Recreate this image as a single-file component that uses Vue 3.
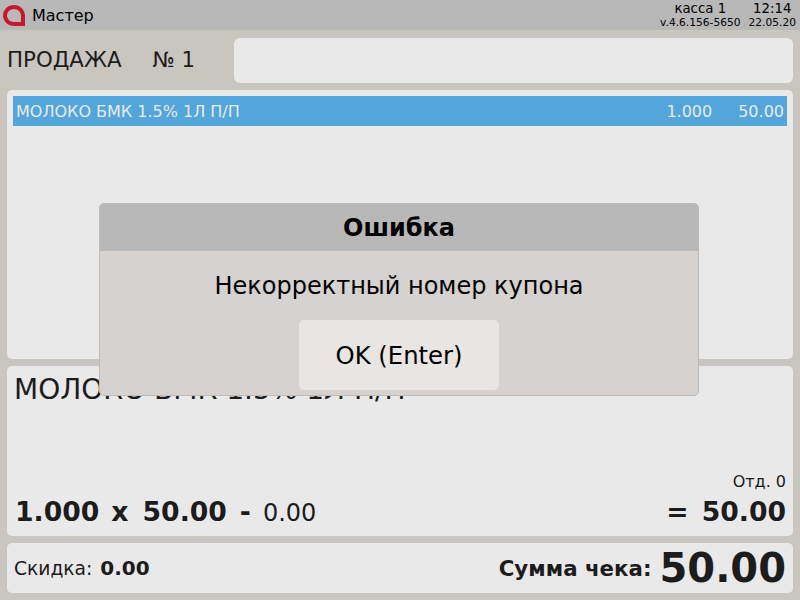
<script setup>
const item = {
  name: 'МОЛОКО БМК 1.5% 1Л П/П',
  qty: '1.000',
  price: '50.00',
}
</script>

<template>
  <div class="screen">
    <header class="top-bar">
      <svg class="logo" width="22" height="21" viewBox="0 0 22 21">
        <path
          d="M11 0C17 0 22 4.700 22 10.500V21H11C5 21 0 16.300 0 10.500 0 4.700 5 0 11 0ZM11 4C7.400 4 4 6.800 4 10.500 4 14.200 7.400 17 11 17H18V10.500C18 6.800 14.600 4 11 4Z"
          fill="#c8172b"
          fill-rule="evenodd"
        />
      </svg>
      <span class="user">Мастер</span>
      <div class="info info-till">
        <span class="info-main">касса 1</span>
        <span class="info-sub">v.4.6.156-5650</span>
      </div>
      <div class="info info-time">
        <span class="info-main">12:14</span>
        <span class="info-sub">22.05.20</span>
      </div>
    </header>

    <main class="content">
      <div class="title-row">
        <div class="title">
          <span>ПРОДАЖА</span>
          <span class="receipt-no">№ 1</span>
        </div>
        <div class="message-box"></div>
      </div>

      <section class="panel items">
        <div class="item-row">
          <span class="item-name">{{ item.name }}</span>
          <span class="item-qty">{{ item.qty }}</span>
          <span class="item-price">{{ item.price }}</span>
        </div>
      </section>

      <section class="panel details">
        <div class="details-name">{{ item.name }}</div>
        <div class="details-dept">Отд. 0</div>
        <div class="details-calc">
          <b>1.000</b>
          <b class="op-x">x</b>
          <b class="calc-price">50.00</b>
          <b class="op-minus">-</b>
          <span class="calc-discount">0.00</span>
          <b class="op-eq">=</b>
          <b class="calc-total">50.00</b>
        </div>
      </section>

      <section class="panel totals">
        <span class="discount-label">Скидка:</span>
        <b class="discount-value">0.00</b>
        <b class="sum-label">Сумма чека:</b>
        <b class="sum-value">50.00</b>
      </section>
    </main>

    <div class="dialog">
      <div class="dialog-title">Ошибка</div>
      <div class="dialog-body">
        <p class="dialog-text">Некорректный номер купона</p>
        <button type="button" class="dialog-button">OK (Enter)</button>
      </div>
    </div>
  </div>
</template>

<style>
html,
body {
  margin: 0;
  background: #c9c6c0;
}
</style>

<style scoped>
.screen {
  position: relative;
  display: flex;
  flex-direction: column;
  width: 800px;
  height: 600px;
  overflow: hidden;
  background: #c9c6c0;
  color: #1c1c1c;
  font-family: "DejaVu Sans", sans-serif;
}

.top-bar {
  display: flex;
  align-items: center;
  flex: none;
  height: 30px;
  padding: 0 4px 0 3px;
  box-sizing: border-box;
  background: #b8b8b8;
  color: #000;
}

.logo {
  flex: none;
}

.user {
  margin-left: 7px;
  font-size: 16px;
}

.info {
  display: flex;
  flex-direction: column;
  align-items: center;
}

.info-till {
  margin-left: auto;
}

.info-time {
  margin-left: 8px;
}

.info-main {
  font-size: 13.33px;
  line-height: 15px;
}

.info-sub {
  font-size: 10.67px;
  line-height: 13px;
}

.content {
  display: flex;
  flex: 1;
  flex-direction: column;
  gap: 7px;
  min-height: 0;
  padding: 8px 7px 7px;
}

.title-row {
  display: flex;
  align-items: center;
  flex: none;
  height: 45px;
}

.title {
  display: flex;
  width: 227px;
  margin-top: -2px;
  font-size: 21.33px;
}

.receipt-no {
  margin-left: 31px;
}

.message-box {
  flex: 1;
  align-self: stretch;
  border-radius: 6px;
  background: #e9e9e9;
}

.panel {
  box-sizing: border-box;
  border-radius: 5px;
  background: #e9e9e9;
}

.items {
  flex: none;
  height: 269px;
  padding: 6px;
}

.item-row {
  display: flex;
  align-items: center;
  height: 30px;
  padding: 0 3px;
  background: #53a6da;
  color: #e9e9e9;
  font-size: 16px;
}

.item-name {
  flex: 1;
}

.item-price {
  margin-left: 26px;
}

.details {
  position: relative;
  display: flex;
  flex: none;
  flex-direction: column;
  height: 170px;
  padding: 4px 7px 0;
}

.details-name {
  font-size: 28px;
  line-height: 40px;
}

.details-dept {
  margin-top: auto;
  font-size: 16px;
  line-height: 20px;
  text-align: right;
}

.details-calc {
  display: flex;
  align-items: baseline;
  height: 44px;
  padding-left: 1px;
  font-size: 26.67px;
  line-height: 40px;
}

.op-x {
  margin-left: 12px;
}

.calc-price {
  margin-left: 14px;
}

.op-minus {
  margin-left: 13px;
}

.calc-discount {
  margin-left: 12px;
  font-size: 24px;
}

.op-eq {
  margin-left: auto;
}

.calc-total {
  margin-left: 13px;
}

.totals {
  display: flex;
  align-items: center;
  flex: none;
  height: 50px;
  padding: 0 7px;
}

.discount-label {
  font-size: 18.67px;
}

.discount-value {
  margin-left: 8px;
  font-size: 20px;
}

.sum-label {
  margin-left: auto;
  font-size: 21.33px;
}

.sum-value {
  margin-left: 8px;
  font-size: 40px;
  line-height: 50px;
}

.dialog {
  position: absolute;
  top: 203px;
  left: 99px;
  box-sizing: border-box;
  width: 600px;
  height: 193px;
  overflow: hidden;
  border: 1px solid #bcbcbc;
  border-radius: 5px;
  background: #d5d2cf;
  color: #000;
}

.dialog-title {
  height: 47px;
  background: #b8b8b8;
  font-size: 24px;
  font-weight: 700;
  line-height: 48px;
  text-align: center;
}

.dialog-body {
  display: flex;
  flex-direction: column;
  align-items: center;
}

.dialog-text {
  margin: 18px 0 0;
  font-size: 24px;
  line-height: 34px;
}

.dialog-button {
  width: 200px;
  height: 70px;
  margin-top: 17px;
  padding: 0;
  border: 0;
  border-radius: 5px;
  background: #e7e6e3;
  color: #000;
  font-family: inherit;
  font-size: 24.3px;
}
</style>
